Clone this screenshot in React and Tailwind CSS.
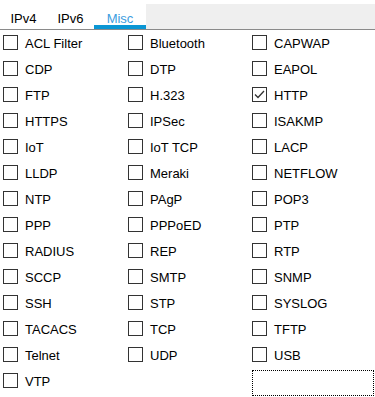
import { useState } from 'react'

const items = [
  'ACL Filter', 'Bluetooth', 'CAPWAP',
  'CDP', 'DTP', 'EAPOL',
  'FTP', 'H.323', 'HTTP',
  'HTTPS', 'IPSec', 'ISAKMP',
  'IoT', 'IoT TCP', 'LACP',
  'LLDP', 'Meraki', 'NETFLOW',
  'NTP', 'PAgP', 'POP3',
  'PPP', 'PPPoED', 'PTP',
  'RADIUS', 'REP', 'RTP',
  'SCCP', 'SMTP', 'SNMP',
  'SSH', 'STP', 'SYSLOG',
  'TACACS', 'TCP', 'TFTP',
  'Telnet', 'UDP', 'USB',
  'VTP',
]

function Check({ label, checked, onToggle }) {
  return (
    <button onClick={onToggle} className="flex items-center h-[26px] text-left">
      <span className="w-[15px] h-[15px] border border-[#333] bg-white flex items-center justify-center shrink-0 -mt-[3px]">
        {checked && (
          <svg width="11" height="11" viewBox="0 0 11 11">
            <path d="M1 5.5 L4 8.5 L10 2" fill="none" stroke="#333" strokeWidth="1.3" />
          </svg>
        )}
      </span>
      <span className="ml-[7px] text-[13px] text-black">{label}</span>
    </button>
  )
}

export default function App() {
  const [tab, setTab] = useState('Misc')
  const [checked, setChecked] = useState({ HTTP: true })

  return (
    <div className="w-[375px] h-[397px] bg-white overflow-hidden" style={{ fontFamily: '"Liberation Sans", Arial, sans-serif' }}>
      <div className="flex h-[30px] border-b border-[#8a8a8a]">
        {['IPv4', 'IPv6', 'Misc'].map(t => (
          <button key={t} onClick={() => setTab(t)}
            className={`relative text-[13px] pt-[8px] ${t === 'Misc' ? 'w-[52px] text-[#3b9de0]' : 'w-[47px] text-black'} text-center`}>
            {t}
            {t === tab && <span className="absolute left-0 right-0 bottom-0 h-[4px] bg-[#0a96d4]" />}
          </button>
        ))}
        <div className="flex-1 mt-[4px] bg-[#efefef]" />
      </div>
      <div className="grid grid-cols-[125px_124px_1fr] pl-[3px] pt-[1px]">
        {items.map(l => (
          <Check key={l} label={l} checked={!!checked[l]}
            onToggle={() => setChecked(c => ({ ...c, [l]: !c[l] }))} />
        ))}
        <div />
        <div className="h-[26px] mt-[1px] mr-[1px] border border-dotted border-black" />
      </div>
    </div>
  )
}
